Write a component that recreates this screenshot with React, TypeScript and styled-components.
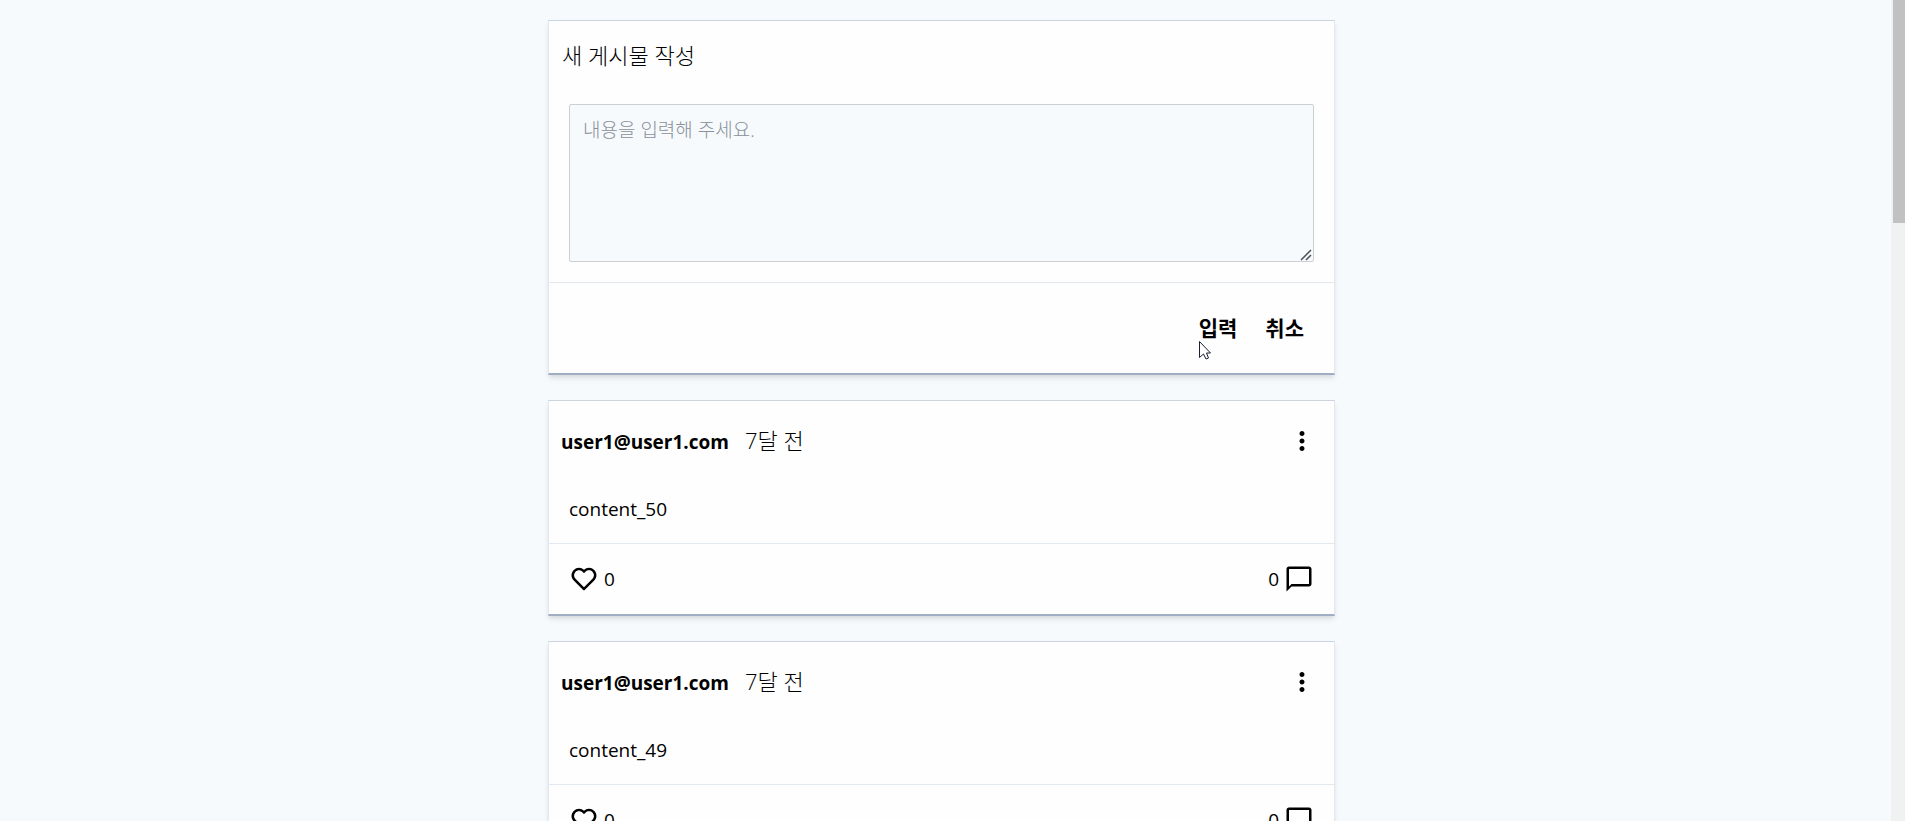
import React from 'react';
import styled, { createGlobalStyle } from 'styled-components';
import { BiDotsVerticalRounded, BiHeart } from 'react-icons/bi';
import { MdOutlineChatBubbleOutline } from 'react-icons/md';

const GlobalStyle = createGlobalStyle`
  *, *::before, *::after { box-sizing: border-box; }
  body {
    margin: 0;
    background: #f6fafd;
    color: #000;
    font-family: 'Open Sans', 'Noto Sans CJK KR', sans-serif;
    font-size: 19px;
    line-height: 28px;
  }
  button, textarea { font: inherit; color: inherit; }
  h1, h2, p { margin: 0; }
`;

const Page = styled.div`
  display: flex;
  justify-content: center;
  padding: 20px 22px 25px 0;
`;

const Feed = styled.main`
  display: flex;
  flex-direction: column;
  gap: 25px;
  width: 100%;
  max-width: 787px;
`;

const Card = styled.article`
  background: #fefefe;
  border: 1px solid #e2e8f0;
  border-top-color: #cbd5e0;
  border-bottom: 2px solid #a0aec4;
  box-shadow: 0 4px 6px -1px rgba(0, 0, 0, 0.1), 0 2px 4px -1px rgba(0, 0, 0, 0.06);
`;

const ComposeForm = styled(Card).attrs({ as: 'form' })``;

const Title = styled.label`
  display: block;
  padding: 20px 13px 15px;
  font-size: 22px;
  font-weight: 300;
`;

const EditorArea = styled.div`
  position: relative;
  padding: 20px;
  border-bottom: 1px solid #e2e8f0;
`;

const Editor = styled.textarea`
  display: block;
  width: 100%;
  height: 158px;
  padding: 11px 13px;
  background: #f6fafd;
  border: 1px solid #cbd0d5;
  border-radius: 2px;
  font-weight: 300;
  outline: none;
  resize: none;
  &::placeholder { color: #8a909a; opacity: 1; }
`;

const Grip = styled.svg`
  position: absolute;
  right: 22px;
  bottom: 21px;
  width: 12px;
  height: 12px;
`;

const ComposeActions = styled.div`
  display: flex;
  justify-content: flex-end;
  gap: 28px;
  padding: 31px 30px;
`;

const TextButton = styled.button`
  padding: 0;
  border: 0;
  background: none;
  font-size: 21px;
  font-weight: 700;
  cursor: pointer;
`;

const PostHeader = styled.header`
  display: flex;
  align-items: center;
  gap: 16px;
  padding: 25px 17px 0 12px;
`;

const Author = styled.h2`
  padding-top: 2px;
  font-size: 19px;
  line-height: 28px;
  font-weight: 700;
`;

const PostedAt = styled.time`
  padding-bottom: 2px;
  font-size: 22px;
  font-weight: 300;
`;

const IconButton = styled.button`
  display: flex;
  align-items: center;
  gap: 5px;
  padding: 0;
  border: 0;
  background: none;
  cursor: pointer;
  svg { width: 30px; height: 30px; }
`;

const MenuButton = styled(IconButton)`
  margin-left: auto;
`;

const PostBody = styled.p`
  padding: 39px 20px 20px;
  border-bottom: 1px solid #e2e8f0;
`;

const PostFooter = styled.footer`
  display: flex;
  justify-content: space-between;
  padding: 20px;
`;

const ScrollTrack = styled.div`
  position: fixed;
  inset: 0 0 0 auto;
  width: 14px;
  padding-left: 2px;
  background: #f0f1f1;
`;

const ScrollThumb = styled.div`
  height: 27.2%;
  background: #c1c1c1;
`;

const Pointer = styled.svg`
  position: absolute;
  top: 340px;
  left: calc(50% + 245px);
  width: 14px;
  height: 20px;
`;

interface PostProps {
  author: string;
  posted: string;
  content: string;
  likes: number;
  comments: number;
}

const posts: PostProps[] = [
  { author: 'user1@user1.com', posted: '7달 전', content: 'content_50', likes: 0, comments: 0 },
  { author: 'user1@user1.com', posted: '7달 전', content: 'content_49', likes: 0, comments: 0 },
];

function Post({ author, posted, content, likes, comments }: PostProps) {
  return (
    <Card>
      <PostHeader>
        <Author>{author}</Author>
        <PostedAt>{posted}</PostedAt>
        <MenuButton type="button" aria-label="메뉴"><BiDotsVerticalRounded /></MenuButton>
      </PostHeader>
      <PostBody>{content}</PostBody>
      <PostFooter>
        <IconButton type="button"><BiHeart />{likes}</IconButton>
        <IconButton type="button">{comments}<MdOutlineChatBubbleOutline /></IconButton>
      </PostFooter>
    </Card>
  );
}

export default function App() {
  return (
    <>
      <GlobalStyle />
      <Page>
        <Feed>
          <ComposeForm>
            <Title htmlFor="content">새 게시물 작성</Title>
            <EditorArea>
              <Editor id="content" placeholder="내용을 입력해 주세요." />
              <Grip viewBox="0 0 12 12" aria-hidden="true">
                <path d="M1 11 11 1M6 11l5-5" fill="none" stroke="#4a5058" strokeWidth="1.5" />
              </Grip>
            </EditorArea>
            <ComposeActions>
              <TextButton type="button">입력</TextButton>
              <TextButton type="button">취소</TextButton>
            </ComposeActions>
          </ComposeForm>
          {posts.map((post) => <Post key={post.content} {...post} />)}
        </Feed>
      </Page>
      <ScrollTrack><ScrollThumb /></ScrollTrack>
      <Pointer viewBox="0 0 14 20" aria-hidden="true">
        <path d="M1.500 1.500v16l4-3.500 2.500 5 2.500-1-2-5h4z" fill="#fff" stroke="#1a2036" />
      </Pointer>
    </>
  );
}
